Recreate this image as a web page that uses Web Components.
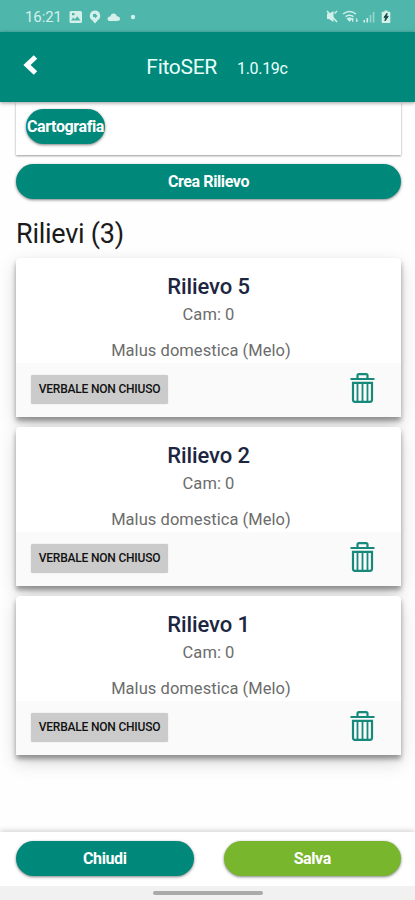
<!DOCTYPE html>
<html lang="it">
<head>
<meta charset="utf-8">
<title>FitoSER</title>
<style>
  html, body { margin: 0; height: 100%; }
  body {
    background: #fefefe;
    font-family: Roboto, "Liberation Sans", sans-serif;
    overflow: hidden;
  }
</style>
</head>
<body>
<fito-app></fito-app>

<script>
  class StatusBar extends HTMLElement {
    constructor() {
      super();
      this.attachShadow({ mode: 'open' });
      this.shadowRoot.innerHTML = `
        <style>
          :host {
            display: flex;
            box-sizing: border-box;
            height: 32px;
            padding: 1px 22px 0 25px;
            justify-content: space-between;
            align-items: center;
            background: #4eb6aa;
            color: #d3f0eb;
            font-size: 15px;
          }
          .side { display: flex; align-items: center; }
          .time { letter-spacing: -.1px; width: 44px; }
          svg { display: block; fill: currentColor; }
        </style>
        <div class="side">
          <span class="time">16:21</span>
          <svg width="70" height="16" viewBox="0 0 70 16">
            <path fill-rule="evenodd" d="M2 2h9.500q1.500 0 1.500 1.500v9q0 1.500-1.500 1.500h-9.500q-1.500 0-1.500-1.500v-9q0-1.500 1.500-1.500zM2 11.500h9.500l-3.200-4.200-2.500 3-1.600-1.800zM3 4v2.200h2.500v-2.200z"/>
            <path fill-rule="evenodd" d="M26 1.500a5.300 5.300 0 0 1 3 9.600l-3 3.400-3-3.400a5.300 5.300 0 0 1 3-9.600zM24 5v3h2v1.500l2.500-2.500-2.500-2.700v.7z"/>
            <path d="M41.500 12q-3 0-3-2.300t2.800-2.200q.8-3.300 3.800-2.900 2.300.3 2.700 2.700 3.200 0 3.200 2.500 0 2.200-3 2.200z"/>
            <circle cx="64" cy="8" r="2.200"/>
          </svg>
        </div>
        <svg width="68" height="16" viewBox="0 0 68 16">
          <path d="M2 4.500h2.500l4-2.500v11l-4.500-3h-2z"/>
          <path d="M2 2l10 11M9.500 4.500l2.500-2.500" fill="none" stroke="currentColor" stroke-width="1.500"/>
          <path d="M18 5q6.500-5 13 0M20.500 7.700q4-3 8 0" fill="none" stroke="currentColor" stroke-width="1.500"/>
          <path d="M22 9.500q2.500-1.700 5 0l-2.500 3zM28 13V9l-1.500 1.700M31.500 9v4l1.300-1.600" stroke="currentColor" stroke-width=".7"/>
          <path d="M38.500 11h1.600v2.500h-1.600zM41.500 9h1.600v4.500h-1.600z"/>
          <path d="M44.700 6h1.600v7.500h-1.600zM47.800 3h1.600v10.500h-1.600z" opacity=".55"/>
          <path d="M59.500 1.500h3v1.300h2q.8 0 .8.800v9.600q0 .8-.8.800h-7q-.8 0-.8-.8v-9.600q0-.8.800-.8h2z"/>
          <path d="M62 4.300l-3 4h1.600l-.6 3.600 3.200-4.500h-1.700z" fill="#174a45" stroke="#174a45"/>
        </svg>
      `;
    }
  }
  customElements.define('status-bar', StatusBar);

  class AppToolbar extends HTMLElement {
    constructor() {
      super();
      this.attachShadow({ mode: 'open' });
      this.shadowRoot.innerHTML = `
        <style>
          :host {
            display: grid;
            grid-template-columns: 64px 1fr 45px;
            align-items: center;
            height: 70px;
            background: #00897b;
            color: #e9fffb;
            box-shadow: 0 1px 4px rgba(0, 0, 0, .4);
            z-index: 1;
          }
          .back { padding: 0 0 5px 22px; }
          svg { display: block; }
          .title {
            display: flex;
            justify-content: center;
            align-items: baseline;
            gap: 20px;
            font-size: 21px;
            letter-spacing: -.3px;
            white-space: nowrap;
          }
          .version { font-size: 16px; }
        </style>
        <div class="back">
          <svg width="16" height="20" viewBox="0 0 16 20">
            <path d="M13.500 2L5 10l8.500 8" fill="none" stroke="#fff" stroke-width="5"/>
          </svg>
        </div>
        <div class="title">
          <span><slot></slot></span>
          <span class="version"><slot name="version"></slot></span>
        </div>
      `;
    }
  }
  customElements.define('app-toolbar', AppToolbar);

  class PillButton extends HTMLElement {
    constructor() {
      super();
      this.attachShadow({ mode: 'open' });
      this.shadowRoot.innerHTML = `
        <style>
          :host { display: flex; }
          button {
            flex: 1;
            height: 35px;
            padding: 0;
            border: 0;
            border-radius: 18px;
            background: var(--pill-color, #00897b);
            color: #fff;
            font: 700 16px/35px Roboto, "Liberation Sans", sans-serif;
            letter-spacing: -.4px;
            white-space: nowrap;
            box-shadow: 0 1px 3px rgba(0, 0, 0, .5);
          }
        </style>
        <button><slot></slot></button>
      `;
    }
  }
  customElements.define('pill-button', PillButton);

  class SurveyCard extends HTMLElement {
    constructor() {
      super();
      this.attachShadow({ mode: 'open' });
      this.shadowRoot.innerHTML = `
        <style>
          :host {
            display: flex;
            flex-direction: column;
            height: 159px;
            background: #fff;
            border-radius: 4px 4px 1px 1px;
            box-shadow: 0 4px 5px rgba(0, 0, 0, .36), 0 7px 18px rgba(0, 0, 0, .17);
            text-align: center;
            color: #6c6c6c;
            font-size: 16.500px;
            letter-spacing: .05px;
          }
          .body { height: 105px; }
          h2 {
            margin: 0;
            padding-top: 16px;
            color: #1d2640;
            font-size: 22px;
            line-height: 26px;
            font-weight: 500;
            letter-spacing: -.1px;
          }
          p { margin: 0; line-height: 20px; }
          .cam { padding-top: 5px; }
          .species { padding: 16px 15px 0 0; }
          footer {
            display: flex;
            flex: 1;
            align-items: center;
            justify-content: space-between;
            padding: 0 26px 0 15px;
            background: #fafafa;
          }
          .state {
            width: 137px;
            height: 29px;
            margin-bottom: 1px;
            border-radius: 2px;
            background: #cbcbcb;
            color: #111;
            font-size: 12px;
            font-weight: 500;
            line-height: 29px;
            letter-spacing: -.2px;
            box-shadow: 0 0 1px rgba(0, 0, 0, .3);
          }
          svg { display: block; margin-bottom: 4px; }
        </style>
        <div class="body">
          <h2><slot name="title"></slot></h2>
          <p class="cam"><slot name="cam"></slot></p>
          <p class="species"><slot name="species"></slot></p>
        </div>
        <footer>
          <div class="state"><slot name="state"></slot></div>
          <svg width="25" height="30" viewBox="0 0 25 30" fill="none" stroke="#16897a">
            <path d="M.5 6h24M7.500 5.500V2.600q0-1.400 1.400-1.400h7.200q1.400 0 1.400 1.400v2.900" stroke-width="2.200"/>
            <path d="M3 9.800h19v17q0 2-2 2H5q-2 0-2-2z" stroke-width="2.200"/>
            <path d="M7.500 10v18M12.500 10v18M17.500 10v18" stroke-width="1.800"/>
          </svg>
        </footer>
      `;
    }
  }
  customElements.define('survey-card', SurveyCard);

  class FitoApp extends HTMLElement {
    constructor() {
      super();
      this.attachShadow({ mode: 'open' });
      this.shadowRoot.innerHTML = `
        <style>
          :host {
            display: flex;
            flex-direction: column;
            height: 900px;
          }
          main {
            flex: 1;
            min-height: 0;
            padding: 0 14px 0 16px;
            overflow: hidden;
          }
          .map {
            box-sizing: border-box;
            height: 53px;
            padding: 7px 10px 0;
            background: #fff;
            box-shadow: 0 1px 2px rgba(0, 0, 0, .4);
          }
          .map pill-button { width: 79px; }
          .create { margin-top: 9.400px; }
          h1 {
            margin: 18.600px 0 8px;
            color: #1b1b1b;
            font-size: 27px;
            font-weight: 400;
            line-height: 32px;
            letter-spacing: -.25px;
          }
          .list { display: grid; gap: 10px; }
          .actions {
            display: grid;
            grid-template-columns: 1fr 1fr;
            gap: 30px;
            box-sizing: border-box;
            height: 54px;
            padding: 9.400px 14px 0 16px;
            background: #fff;
            box-shadow: 0 -1px 6px rgba(0, 0, 0, .2);
            z-index: 1;
          }
          .save { --pill-color: #78b62d; }
          .gesture {
            display: flex;
            height: 14px;
            align-items: center;
            justify-content: center;
            background: #f1f1f1;
            z-index: 1;
          }
          .gesture span {
            width: 110px;
            height: 4px;
            border-radius: 2px;
            background: #aaa;
          }
        </style>
        <status-bar></status-bar>
        <app-toolbar>FitoSER<span slot="version">1.0.19c</span></app-toolbar>
        <main>
          <div class="map"><pill-button>Cartografia</pill-button></div>
          <pill-button class="create">Crea Rilievo</pill-button>
          <h1>Rilievi (3)</h1>
          <div class="list">
            ${[5, 2, 1].map(n => `
              <survey-card>
                <span slot="title">Rilievo ${n}</span>
                <span slot="cam">Cam: 0</span>
                <span slot="species">Malus domestica (Melo)</span>
                <span slot="state">VERBALE NON CHIUSO</span>
              </survey-card>`).join('')}
          </div>
        </main>
        <div class="actions">
          <pill-button>Chiudi</pill-button>
          <pill-button class="save">Salva</pill-button>
        </div>
        <div class="gesture"><span></span></div>
      `;
    }
  }
  customElements.define('fito-app', FitoApp);
</script>
</body>
</html>
